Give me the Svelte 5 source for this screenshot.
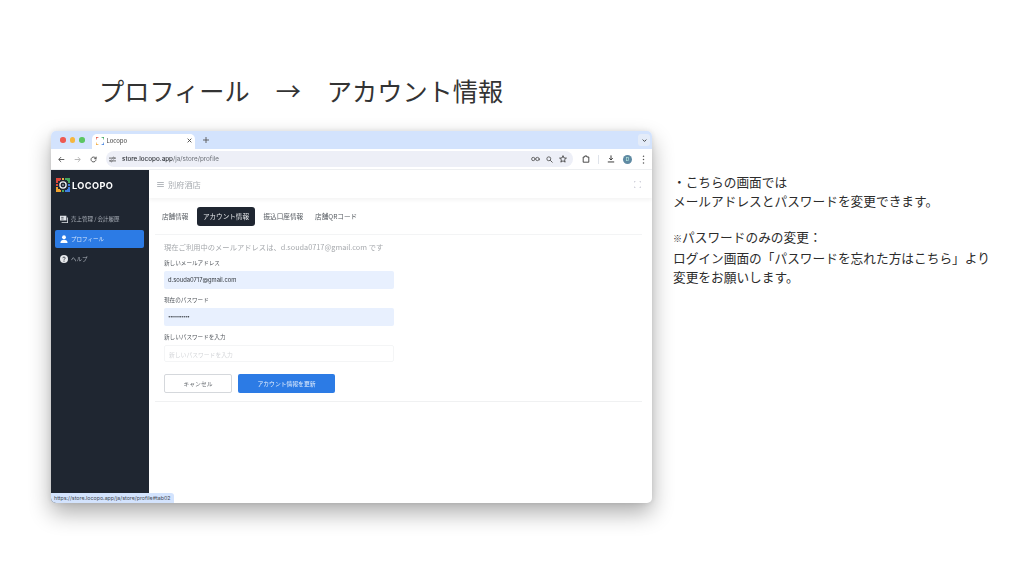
<script>
  const sideItems = [
    { label: '売上管理 / 会計履歴', icon: 'sales', active: false },
    { label: 'プロフィール', icon: 'user', active: true },
    { label: 'ヘルプ', icon: 'help', active: false }
  ];
  const tabs = ['店舗情報', 'アカウント情報', '振込口座情報', '店舗QRコード'];
  const fields = [
    { label: '新しいメールアドレス', value: 'd.souda0717@gmail.com', filled: true },
    { label: '現在のパスワード', value: '•••••••••••', filled: true, dots: true },
    { label: '新しいパスワードを入力', value: '新しいパスワードを入力', filled: false }
  ];
</script>

<div class="slide">
  <h1 class="title"><span>プロフィール</span><span class="arrow">→</span><span>アカウント情報</span></h1>
  <div class="row">
    <div class="window">
      <div class="tabstrip">
        <div class="lights"><i class="r"></i><i class="y"></i><i class="g"></i></div>
        <div class="btab">
          <svg class="fav" viewBox="0 0 10 10" width="8" height="8"><path d="M0 3V0h3" stroke="#e25141" fill="none" stroke-width="1.6"/><path d="M7 0h3v3" stroke="#3ba55c" fill="none" stroke-width="1.6"/><path d="M0 7v3h3" stroke="#f2a93b" fill="none" stroke-width="1.6"/><path d="M7 10h3V7" stroke="#3f7fe0" fill="none" stroke-width="1.6"/></svg>
          <span>Locopo</span>
          <svg class="close" viewBox="0 0 8 8" width="5" height="5"><path d="M1 1l6 6M7 1l-6 6" stroke="#444" stroke-width="1.4"/></svg>
        </div>
        <svg class="plus" viewBox="0 0 8 8" width="6" height="6"><path d="M4 0v8M0 4h8" stroke="#555" stroke-width="1.2"/></svg>
        <div class="chev"><svg viewBox="0 0 8 8" width="5" height="5"><path d="M1 2.5L4 5.5 7 2.5" stroke="#333" fill="none" stroke-width="1.4"/></svg></div>
      </div>
      <div class="toolbar">
        <svg viewBox="0 0 10 10" width="7" height="7"><path d="M9 5H1.5M4.5 1.5L1 5l3.5 3.5" stroke="#444" fill="none" stroke-width="1.2"/></svg>
        <svg viewBox="0 0 10 10" width="7" height="7"><path d="M1 5h7.5M5.5 1.5L9 5 5.5 8.5" stroke="#aaa" fill="none" stroke-width="1.2"/></svg>
        <svg viewBox="0 0 10 10" width="7" height="7"><path d="M8.5 5A3.5 3.5 0 1 1 7.4 2.4L8.8 3.6M8.8 1v2.8H6" stroke="#444" fill="none" stroke-width="1.2"/></svg>
        <div class="omni">
          <svg viewBox="0 0 10 10" width="7" height="7"><path d="M0 3h5M8 3h2M0 7h2M5 7h5" stroke="#444" stroke-width="1.1"/><circle cx="6.5" cy="3" r="1.3" fill="none" stroke="#444"/><circle cx="3.5" cy="7" r="1.3" fill="none" stroke="#444"/></svg>
          <span class="url"><b>store.locopo.app</b>/ja/store/profile</span>
          <div class="omni-icons">
            <svg viewBox="0 0 12 8" width="9" height="6"><circle cx="3" cy="4" r="2.2" fill="none" stroke="#444" stroke-width="1"/><circle cx="8.500" cy="4" r="2.200" fill="none" stroke="#444" stroke-width="1"/><path d="M5.200 4h1.100M10.500 4H12v2" stroke="#444" fill="none" stroke-width="1"/></svg>
            <svg viewBox="0 0 10 10" width="7" height="7"><circle cx="4" cy="4" r="2.8" fill="none" stroke="#444" stroke-width="1.1"/><path d="M6 6l3.3 3.3" stroke="#444" stroke-width="1.2"/></svg>
            <svg viewBox="0 0 10 10" width="8" height="8"><path d="M5 .8l1.2 2.9 3.1.2-2.4 2 .8 3L5 7.3 2.300 8.900l.8-3-2.400-2 3.100-.2z" fill="none" stroke="#333" stroke-width="1"/></svg>
          </div>
        </div>
        <div class="tb-right">
          <svg viewBox="0 0 10 10" width="8" height="8"><path d="M1.500 2.500h2V1.200h2.500v1.300h2.500v6.500h-7z" fill="none" stroke="#333" stroke-width="1.1"/></svg>
          <i class="sep"></i>
          <svg viewBox="0 0 10 10" width="8" height="8"><path d="M5 .5v5.500M2.800 4L5 6.200 7.200 4M1 8.700h8" stroke="#333" fill="none" stroke-width="1.200"/></svg>
          <span class="avatar">D</span>
          <svg class="kebab" viewBox="0 0 4 12" width="3" height="9"><circle cx="2" cy="1.500" r="1" fill="#555"/><circle cx="2" cy="6" r="1" fill="#555"/><circle cx="2" cy="10.500" r="1" fill="#555"/></svg>
        </div>
      </div>
      <div class="app">
        <aside class="side">
          <div class="logo">
            <svg viewBox="0 0 14 14" width="14" height="14">
              <path d="M0 0h5v2h-1v1H2v2H0z" fill="#e0483b"/><path d="M6 0h2v2H6z" fill="#e9b04a"/>
              <path d="M9 0h5v5h-2V3h-1V2H9z" fill="#45a85f"/><path d="M12 6h2v2h-2z" fill="#3f7fe0"/>
              <path d="M0 9h2v2h2v1h1v2H0z" fill="#f0a22e"/><path d="M0 6h2v2H0z" fill="#e0483b"/>
              <path d="M12 9h2v5H9v-2h2v-1h1z" fill="#3f7fe0"/><path d="M6 12h2v2H6z" fill="#45a85f"/>
              <circle cx="7" cy="7" r="3.100" fill="none" stroke="#eef0f2" stroke-width="1.300"/>
              <circle cx="7" cy="7" r="1.100" fill="#8a9099"/>
            </svg>
            <span>LOCOPO</span>
          </div>
          <nav class="nav">
            {#each sideItems as it}
              <div class="nav-item" class:active={it.active}>
                {#if it.icon === 'sales'}
                  <svg viewBox="0 0 10 10" width="8" height="8"><path d="M0 1h8v6H0z" fill="#dfe3e8"/><path d="M9 3h1v7H2V9h7z" fill="#dfe3e8"/><path d="M1.500 3h3M1.500 5h3" stroke="#1f2631" stroke-width=".8"/></svg>
                {:else if it.icon === 'user'}
                  <svg viewBox="0 0 10 10" width="8" height="8"><circle cx="5" cy="2.800" r="2.400" fill="#fff"/><path d="M.5 10c0-3 2-4 4.500-4s4.500 1 4.500 4z" fill="#fff"/></svg>
                {:else}
                  <svg viewBox="0 0 10 10" width="8" height="8"><circle cx="5" cy="5" r="5" fill="#e6e8eb"/><path d="M3.500 4c0-2 3-2 3 0 0 1-1.500 1-1.500 2" stroke="#1f2631" fill="none" stroke-width="1"/><circle cx="5" cy="7.600" r=".7" fill="#1f2631"/></svg>
                {/if}
                <span>{it.label}</span>
              </div>
            {/each}
          </nav>
        </aside>
        <main class="content">
          <header class="head">
            <svg viewBox="0 0 8 6" width="7" height="5"><path d="M0 .6h8M0 3h8M0 5.400h8" stroke="#9aa0a6" stroke-width=".9"/></svg>
            <span class="store">別府酒店</span>
            <svg class="expand" viewBox="0 0 8 8" width="7" height="7"><path d="M0 2V0h2M6 0h2v2M0 6v2h2M6 8h2V6" stroke="#aab" fill="none" stroke-width=".7"/></svg>
          </header>
          <div class="body">
            <div class="tabs">
              {#each tabs as t, i}
                <span class="tab" class:on={i === 1}>{t}</span>
              {/each}
            </div>
            <section class="card">
              <p class="current">現在ご利用中のメールアドレスは、d.souda0717@gmail.com です</p>
              {#each fields as f}
                <div class="field">
                  <span class="lab">{f.label}</span>
                  <div class="input" class:filled={f.filled} class:dots={f.dots}>{f.value}</div>
                </div>
              {/each}
              <div class="actions">
                <button class="cancel">キャンセル</button>
                <button class="save">アカウント情報を更新</button>
              </div>
            </section>
          </div>
        </main>
      </div>
      <div class="status">https://store.locopo.app/ja/store/profile#tab02</div>
    </div>
    <div class="notes">
      <p>・こちらの画面では<br />メールアドレスとパスワードを変更できます。</p>
      <p><span class="mark">※</span>パスワードのみの変更：<br />ログイン画面の「パスワードを忘れた方はこちら」より<br />変更をお願いします。</p>
    </div>
  </div>
</div>

<style>
  :global(body) {
    margin: 0;
    background: #fff;
  }
  .slide {
    width: 1024px;
    height: 576px;
    overflow: hidden;
    box-sizing: border-box;
    padding-top: 71px;
    font-family: "Noto Sans CJK JP", "Noto Sans", sans-serif;
    color: #222;
  }
  .title {
    display: flex;
    margin: 0 0 22px 99px;
    height: 38px;
    line-height: 38px;
    font-size: 25.200px;
    font-weight: 400;
    color: #333;
    white-space: nowrap;
  }
  .arrow {
    margin: 0 26px;
  }
  .row {
    display: flex;
    align-items: flex-start;
    padding-left: 51px;
  }
  .window {
    position: relative;
    width: 601px;
    height: 372px;
    flex: none;
    display: flex;
    flex-direction: column;
    border-radius: 5px;
    overflow: hidden;
    background: #fff;
    box-shadow: 0 10px 22px rgba(0, 0, 0, 0.32), 0 0 6px rgba(0, 0, 0, 0.1);
    filter: blur(0.3px);
  }
  .tabstrip {
    height: 18px;
    flex: none;
    display: flex;
    align-items: center;
    background: #d3e3fd;
    padding-left: 9px;
  }
  .lights {
    display: flex;
    gap: 4px;
    margin-right: 7px;
  }
  .lights i {
    width: 5.500px;
    height: 5.500px;
    border-radius: 50%;
  }
  .r { background: #ee5a52; }
  .y { background: #f5b63f; }
  .g { background: #5cc663; }
  .btab {
    width: 103px;
    height: 15px;
    margin-top: 3px;
    display: flex;
    align-items: center;
    box-sizing: border-box;
    padding: 0 3px 2px 4px;
    background: #fff;
    border-radius: 5px 5px 0 0;
    font-size: 6px;
    color: #444;
  }
  .fav { margin-right: 3px; }
  .close { margin-left: auto; }
  .plus { margin-left: 8px; }
  .chev {
    margin-left: auto;
    margin-right: 2px;
    width: 12px;
    height: 12px;
    border-radius: 3px;
    background: #e4ecf9;
    display: flex;
    align-items: center;
    justify-content: center;
  }
  .toolbar {
    height: 21px;
    flex: none;
    display: flex;
    align-items: center;
    background: #fff;
    padding-left: 7px;
    gap: 9px;
    border-bottom: 1px solid #eef0f2;
    box-sizing: border-box;
  }
  .omni {
    width: 467px;
    height: 16px;
    box-sizing: border-box;
    display: flex;
    align-items: center;
    padding: 0 6px 0 3px;
    gap: 6px;
    border-radius: 8px;
    background: #edeff7;
  }
  .url {
    font-family: "Inter", "Liberation Sans", sans-serif;
    font-size: 6.300px;
    color: #6a6e75;
  }
  .url b {
    font-weight: 500;
    color: #2f3338;
  }
  .omni-icons {
    margin-left: auto;
    display: flex;
    align-items: center;
    gap: 6px;
  }
  .tb-right {
    display: flex;
    align-items: center;
    gap: 8px;
  }
  .sep {
    width: 1px;
    height: 9px;
    background: #dfe3ea;
  }
  .avatar {
    width: 9px;
    height: 9px;
    border-radius: 50%;
    background: #5f8aa3;
    color: #cfe;
    font: 5px/9px "Inter", sans-serif;
    text-align: center;
  }
  .kebab { margin-left: 2px; }
  .app {
    flex: 1;
    min-height: 0;
    display: flex;
  }
  .side {
    width: 98px;
    flex: none;
    background: #1f2631;
    padding: 7px 5px 0 4px;
    box-sizing: border-box;
  }
  .logo {
    display: flex;
    align-items: center;
    gap: 2px;
    padding-left: 1px;
    height: 16px;
    color: #fff;
    font-family: "Inter", "Liberation Sans", sans-serif;
    font-size: 9.200px;
    font-weight: 700;
    letter-spacing: 0.4px;
  }
  .nav {
    margin-top: 17px;
    display: flex;
    flex-direction: column;
    gap: 2px;
  }
  .nav-item {
    height: 18px;
    display: flex;
    align-items: center;
    gap: 3px;
    padding-left: 5px;
    border-radius: 2px;
    font-size: 5.500px;
    color: #aeb4bd;
  }
  .nav-item.active {
    background: #2c7be5;
    color: #d6e6fb;
  }
  .content {
    flex: 1;
    min-width: 0;
    display: flex;
    flex-direction: column;
  }
  .head {
    height: 28px;
    flex: none;
    display: flex;
    align-items: center;
    padding: 0 11px 0 8px;
    gap: 4px;
    box-shadow: 0 2px 4px rgba(0, 0, 0, 0.05);
    font-size: 8.200px;
    color: #a8acb1;
  }
  .expand { margin-left: auto; }
  .body {
    padding: 9px 10px 0 6px;
  }
  .tabs {
    display: flex;
    align-items: center;
    gap: 8.500px;
    height: 19px;
    padding-left: 7px;
  }
  .tab {
    font-size: 6.600px;
    color: #555a60;
    line-height: 19px;
  }
  .tab:last-child { margin-left: 3.500px; }
  .tab.on {
    background: #1f2631;
    color: #e7e9ec;
    padding: 0 6px;
    border-radius: 3px;
  }
  .card {
    margin-top: 8px;
    padding: 6px 9px 8px;
    border-top: 1px solid #f3f4f5;
    border-bottom: 1px solid #f0f1f2;
  }
  .current {
    margin: 0;
    height: 12px;
    line-height: 12px;
    font-size: 7.300px;
    color: #a6a9ad;
    white-space: nowrap;
  }
  .field {
    width: 230px;
    margin-top: 5px;
  }
  .lab {
    display: block;
    height: 11px;
    line-height: 11px;
    font-size: 5.600px;
    color: #50555b;
  }
  .field + .field { margin-top: 5.750px; }
  .input {
    margin-top: 2px;
    height: 17.500px;
    line-height: 17.500px;
    box-sizing: border-box;
    padding-left: 4px;
    border: 1px solid #f4f5f6;
    border-radius: 2px;
    font-size: 5.800px;
    color: #d4d6d9;
  }
  .input.filled {
    border: none;
    background: #e8f0fe;
    color: #31363c;
    font-family: "Inter", "Liberation Sans", sans-serif;
    height: 18px;
    line-height: 18px;
  }
  .input.dots {
    font-size: 4.500px;
    letter-spacing: -0.600px;
  }
  .actions {
    margin-top: 12px;
    display: flex;
    gap: 6px;
  }
  button {
    height: 19px;
    padding: 0;
    border-radius: 2px;
    font-family: inherit;
    font-size: 5.800px;
  }
  .cancel {
    width: 68px;
    background: #fff;
    border: 1px solid #d5d8dc;
    color: #666b70;
  }
  .save {
    width: 97px;
    background: #2c7be5;
    border: none;
    color: #e8f1fd;
  }
  .status {
    position: absolute;
    left: 0;
    bottom: 0;
    height: 10px;
    line-height: 10px;
    padding: 0 3px;
    background: #d3e3fd;
    border-radius: 0 3px 0 0;
    font-family: "Inter", "Liberation Sans", sans-serif;
    font-size: 5.300px;
    color: #444a52;
  }
  .notes {
    margin: 41px 0 0 21px;
    font-size: 12.700px;
    line-height: 19.200px;
    color: #2c2c2c;
    white-space: nowrap;
  }
  .notes p {
    margin: 0 0 16.500px;
  }
  .mark {
    font-size: 9px;
    font-weight: 700;
  }
</style>
